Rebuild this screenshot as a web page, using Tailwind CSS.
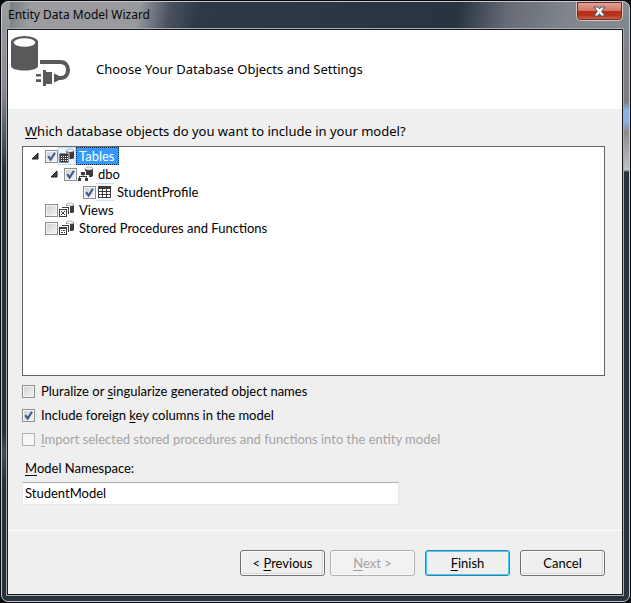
<!DOCTYPE html>
<html lang="en">
<head>
<meta charset="utf-8">
<meta name="viewport" content="width=device-width, initial-scale=1">
<title>Entity Data Model Wizard</title>
<script src="https://cdn.jsdelivr.net/npm/@tailwindcss/browser@4"></script>
</head>
<body class="bg-[#0a0910] font-['Lato','Noto_Sans',sans-serif] text-[13px] leading-[18px] text-black">
<svg class="hidden" aria-hidden="true">
  <symbol id="check" viewBox="0 0 13 13"><path d="M3.2 6.2 5.6 9.6 10 2.8" fill="none" stroke="#40568f" stroke-width="2.1"/></symbol>
  <symbol id="arrow" viewBox="0 0 8 8"><path d="M7 1v6H1z" fill="#404040" stroke="#202020"/></symbol>
  <symbol id="db" viewBox="0 0 16 16"><path d="M7 2.500v8.500h5.500q2.500 0 2.500-1.500v-7z" fill="#3b3b3e"/><ellipse cx="11" cy="2.500" rx="3.800" ry="1.500" fill="#f4f4f4" stroke="#8b8b8d" stroke-width=".6"/></symbol>
</svg>
<main class="flex min-h-screen flex-col p-px">
  <section class="flex flex-1 flex-col rounded-[7px] border border-[#c4c8cc] pr-[6px] pb-[6px] pl-[5px] [background:linear-gradient(#858a91_0,#7b7f84_100px,#8ab1df_108px,#8ab1df_120px,#8c8c8e_130px,#c2c2c4_168px,#29333e_170px,#29333e_100%)_right_top/8px_100%_no-repeat,linear-gradient(#9b9da1_0,#85898e_90px,#59616b_125px,#252f3a_170px,#252f3a_430px,#424e5d_450px,#26303b_480px)_left_top/8px_100%_no-repeat,linear-gradient(100deg,#6d7279_0,#9b9da1_30px,#989a9e_135px,#48525e_167px,#2d3945_195px,#28343f_450px,#666b75_500px,#80868c_560px,#858a91_100%)_top/100%_30px_no-repeat,#29333f]">
    <header class="flex h-[27px] items-start justify-between">
      <h1 class="pt-[4px] pl-px font-['Noto_Sans',sans-serif] text-[12px] text-[#080808]">Entity Data Model Wizard</h1>
      <button type="button" aria-label="Close" class="grid h-[19px] w-[47px] place-items-center rounded-b-[5px] border border-t-0 border-[#d9c4c4] bg-[linear-gradient(#e4a59d_0,#cf7468_48%,#b53018_50%,#b83519_75%,#d0755c_100%)] shadow-[inset_0_0_0_1px_#742b24]">
        <svg class="h-[11px] w-[13px]" viewBox="0 0 13 11" aria-hidden="true"><path d="M1 1h4l1.5 2L8 1h4L8.7 5.3 12 10H8L6.5 7.7 5 10H1l3.3-4.7z" fill="#fafafa" stroke="#4c505e"/></svg>
      </button>
    </header>
    <form class="flex flex-1 flex-col border border-[#171b21] bg-[#efefef] outline outline-[#a8acb1]">
      <div class="flex h-[79px] items-start bg-white">
        <svg class="mt-[6px] ml-[2px] h-[51px] w-[61px]" viewBox="10 36 61 51" aria-hidden="true">
          <path d="M11 41v25c0 6 27 6 27 0V41z" fill="#58595b"/><ellipse cx="24.500" cy="42" rx="13.500" ry="6" fill="#58595b"/><ellipse cx="24.500" cy="42.500" rx="10.800" ry="4.300" fill="#fff"/>
          <path d="M40 62h20.500c10 0 10 16 0 16h-3.500" fill="none" stroke="#58595b" stroke-width="4"/>
          <path d="M36 74h5v2.600h-5zM36 79.300h5V82h-5zM43 70h3v2h6v12h-6v2h-3zM54 73.500l4.500 2v5l-4.500 2z" fill="#58595b"/>
        </svg>
        <h2 class="mt-[30px] ml-[25px] font-['Noto_Sans',sans-serif] text-[13px]">Choose Your Database Objects and Settings</h2>
      </div>
      <div class="flex flex-1 flex-col pr-[17px] pl-[14px]">
        <p id="question" class="mt-[13px] ml-[3px] font-['Noto_Sans',sans-serif] text-[13px]"><u class="underline-offset-2">W</u>hich database objects do you want to include in your model?</p>
        <ul aria-labelledby="question" class="mt-[6px] min-h-[160px] flex-1 border border-[#646464] bg-white pl-[8px]">
          <li class="flex h-[18px] items-center">
            <svg class="mr-[6px] h-[8px] w-[8px]" aria-hidden="true"><use href="#arrow"/></svg>
            <span class="relative h-[13px] w-[13px]"><input id="tables" type="checkbox" checked class="peer block h-[13px] w-[13px] appearance-none border border-[#8e8f8f] bg-linear-to-br from-[#cbcfd5] to-[#f6f6f6] shadow-[inset_0_0_0_1px_#f4f4f4]"><svg class="pointer-events-none absolute inset-0 hidden h-[13px] w-[13px] peer-checked:block" aria-hidden="true"><use href="#check"/></svg></span>
            <label for="tables" class="flex h-[18px] items-center"><svg class="h-[18px] w-[18px] border border-[#c3ddfb] bg-[#eaf3fe]" viewBox="0 0 16 16" aria-hidden="true"><use href="#db" width="16" height="16"/><path d="M0 5h10v10H0z" fill="#3b3b3e" stroke="#fff" stroke-width=".8"/><path d="M2 8h1v1H2zM4 8h1v1H4zM6 8h1v1H6zM8 8h1v1H8zM2 10h1v1H2zM4 10h1v1H4zM6 10h1v1H6zM8 10h1v1H8zM2 12h1v1H2zM4 12h1v1H4zM6 12h1v1H6zM8 12h1v1H8z" fill="#fff"/></svg><span class="border border-dotted border-[#14263a] bg-[#3399ff] pr-[3px] pl-[2px] leading-[16px] text-white">Tables</span></label>
          </li>
          <li class="ml-[19px] flex h-[18px] items-center">
            <svg class="mr-[6px] h-[8px] w-[8px]" aria-hidden="true"><use href="#arrow"/></svg>
            <span class="relative h-[13px] w-[13px]"><input id="dbo" type="checkbox" checked class="peer block h-[13px] w-[13px] appearance-none border border-[#8e8f8f] bg-linear-to-br from-[#cbcfd5] to-[#f6f6f6] shadow-[inset_0_0_0_1px_#f4f4f4]"><svg class="pointer-events-none absolute inset-0 hidden h-[13px] w-[13px] peer-checked:block" aria-hidden="true"><use href="#check"/></svg></span>
            <label for="dbo" class="flex items-center"><svg class="mr-[4px] ml-px h-[16px] w-[16px]" viewBox="0 0 16 16" aria-hidden="true"><use href="#db" width="16" height="16"/><path d="M2 5h6v4h3v6H0V9h2z" fill="#fff"/><path d="M3 6h4v3H5.500v1H9v2h1v3H7v-3h1v-1H2v1h1v3H0v-3h1v-2h3.500V9H3z" fill="#3b3b3e"/></svg>dbo</label>
          </li>
          <li class="ml-[52px] flex h-[18px] items-center">
            <span class="relative h-[13px] w-[13px]"><input id="student" type="checkbox" checked class="peer block h-[13px] w-[13px] appearance-none border border-[#8e8f8f] bg-linear-to-br from-[#cbcfd5] to-[#f6f6f6] shadow-[inset_0_0_0_1px_#f4f4f4]"><svg class="pointer-events-none absolute inset-0 hidden h-[13px] w-[13px] peer-checked:block" aria-hidden="true"><use href="#check"/></svg></span>
            <label for="student" class="flex items-center"><svg class="mr-[3px] h-[18px] w-[18px] border-y border-[#c3ddfb]" viewBox="0 0 18 16" aria-hidden="true"><path d="M2 2h13v12H2z" fill="#3b3b3e"/><path d="M3 5h3v2H3zM7 5h3v2H7zM11 5h3v2h-3zM3 8h3v2H3zM7 8h3v2H7zM11 8h3v2h-3zM3 11h3v2H3zM7 11h3v2H7zM11 11h3v2h-3z" fill="#fff"/></svg>StudentProfile</label>
          </li>
          <li class="ml-[14px] flex h-[18px] items-center">
            <span class="relative h-[13px] w-[13px]"><input id="views" type="checkbox" class="peer block h-[13px] w-[13px] appearance-none border border-[#8e8f8f] bg-linear-to-br from-[#cbcfd5] to-[#f6f6f6] shadow-[inset_0_0_0_1px_#f4f4f4]"><svg class="pointer-events-none absolute inset-0 hidden h-[13px] w-[13px] peer-checked:block" aria-hidden="true"><use href="#check"/></svg></span>
            <label for="views" class="flex items-center"><svg class="mr-[4px] ml-px h-[16px] w-[16px]" viewBox="0 0 16 16" aria-hidden="true"><use href="#db" width="16" height="16"/><path d="M2 4h9v9H9v2H0V6h2z" fill="#fff"/><path d="M3 5h7v7H9V6H3zM0 7h8v8H0z" fill="#3b3b3e"/><path d="M1 8h6v6H1z" fill="#fff"/><path d="M2 9h1v1H2zM5 9h1v1H5zM3 10h2v2H3zM2 12h1v1H2zM5 12h1v1H5z" fill="#3b3b3e"/></svg>Views</label>
          </li>
          <li class="ml-[14px] flex h-[18px] items-center">
            <span class="relative h-[13px] w-[13px]"><input id="procs" type="checkbox" class="peer block h-[13px] w-[13px] appearance-none border border-[#8e8f8f] bg-linear-to-br from-[#cbcfd5] to-[#f6f6f6] shadow-[inset_0_0_0_1px_#f4f4f4]"><svg class="pointer-events-none absolute inset-0 hidden h-[13px] w-[13px] peer-checked:block" aria-hidden="true"><use href="#check"/></svg></span>
            <label for="procs" class="flex items-center"><svg class="mr-[4px] ml-px h-[16px] w-[16px]" viewBox="0 0 16 16" aria-hidden="true"><use href="#db" width="16" height="16"/><path d="M2 4h9v9H9v2H0V6h2z" fill="#fff"/><path d="M3 5h7v7H9V6H3zM0 7h8v8H0z" fill="#3b3b3e"/><path d="M1 9h6v5H1z" fill="#fff"/><path d="M2 10h1v1H2zM4 10h2v1H4zM2 12h2v1H2zM5 12h1v1H5z" fill="#3b3b3e"/></svg>Stored Procedures and Functions</label>
          </li>
        </ul>
        <div class="mt-[6px] flex flex-col gap-[6px]">
          <div class="flex items-center gap-[6px]">
            <input id="plural" type="checkbox" class="h-[13px] w-[13px] appearance-none border border-[#8e8f8f] bg-linear-to-br from-[#cbcfd5] to-[#f6f6f6] shadow-[inset_0_0_0_1px_#f4f4f4]">
            <label for="plural">Pluralize or <u class="underline-offset-2">s</u>ingularize generated object names</label>
          </div>
          <div class="flex items-center gap-[6px]">
            <span class="relative h-[13px] w-[13px]"><input id="foreign" type="checkbox" checked class="peer block h-[13px] w-[13px] appearance-none border border-[#8e8f8f] bg-linear-to-br from-[#cbcfd5] to-[#f6f6f6] shadow-[inset_0_0_0_1px_#f4f4f4]"><svg class="pointer-events-none absolute inset-0 hidden h-[13px] w-[13px] peer-checked:block" aria-hidden="true"><use href="#check"/></svg></span>
            <label for="foreign">Include foreign <u class="underline-offset-2">k</u>ey columns in the model</label>
          </div>
          <div class="flex items-center gap-[6px] text-[#a3a3a3]">
            <input id="import" type="checkbox" disabled class="h-[13px] w-[13px] appearance-none border border-[#b1b1b1] bg-[#f6f6f6]">
            <label for="import"><u class="underline-offset-2">I</u>mport selected stored procedures and functions into the entity model</label>
          </div>
        </div>
        <label for="namespace" class="mt-[11px] ml-[3px]"><u class="underline-offset-2">M</u>odel Namespace:</label>
        <input id="namespace" type="text" value="StudentModel" class="mt-[5px] h-[23px] w-full max-w-[377px] border border-[#e2e7ee] border-t-[#abadb3] bg-white px-[2px] pb-[2px] outline-none">
      </div>
      <footer class="mt-[25px] flex justify-end gap-[5px] border-t border-white px-[17px] pt-[19px] pb-[18px]">
        <button type="button" class="h-[26px] w-[85px] rounded-[3px] border border-[#707070] bg-[#efefef] shadow-[inset_0_0_0_1px_#fcfcfc,inset_-2px_-2px_0_#d8d8d8]">&lt; <u class="underline-offset-2">P</u>revious</button>
        <button type="button" disabled class="h-[26px] w-[85px] rounded-[3px] border border-[#adb2b5] bg-[#f2f2f2] text-[#a0a0a0] shadow-[inset_0_0_0_1px_#fcfcfc]"><u class="underline-offset-2">N</u>ext &gt;</button>
        <button type="submit" class="ml-[5px] h-[26px] w-[85px] rounded-[3px] border border-[#3c7fb1] bg-[#efefef] shadow-[inset_0_0_0_1px_#43cdf4]"><u class="underline-offset-2">F</u>inish</button>
        <button type="button" class="ml-[5px] h-[26px] w-[85px] rounded-[3px] border border-[#707070] bg-[#efefef] shadow-[inset_0_0_0_1px_#fcfcfc,inset_-2px_-2px_0_#d8d8d8]">Cancel</button>
      </footer>
    </form>
  </section>
</main>
</body>
</html>
